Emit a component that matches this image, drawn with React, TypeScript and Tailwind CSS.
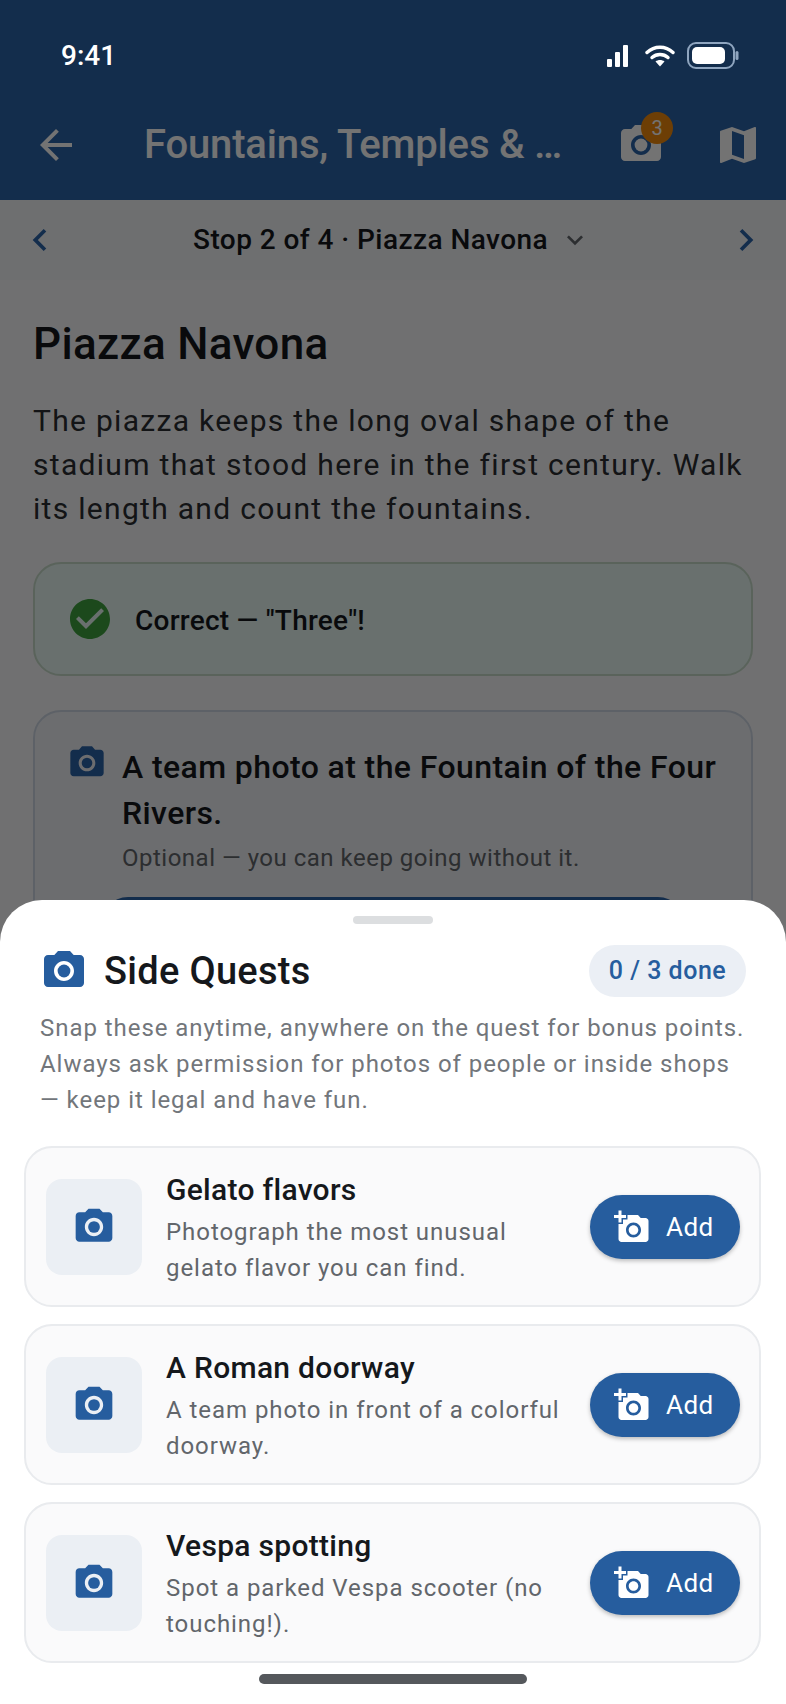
import {
  MdAddAPhoto,
  MdArrowBack,
  MdCheckCircle,
  MdChevronLeft,
  MdChevronRight,
  MdKeyboardArrowDown,
  MdMap,
  MdPhotoCamera,
} from "react-icons/md";

const quests = [
  { title: "Gelato flavors", lines: ["Photograph the most unusual", "gelato flavor you can find."] },
  { title: "A Roman doorway", lines: ["A team photo in front of a colorful", "doorway."] },
  { title: "Vespa spotting", lines: ["Spot a parked Vespa scooter (no", "touching!)."] },
];

function StatusIcons() {
  return (
    <div className="flex items-center">
      <svg width="22" height="24" viewBox="0 0 22 24" className="mr-[16px]">
        <rect x="0" y="15" width="5" height="8" rx="1" fill="#fff" />
        <rect x="8" y="8" width="5" height="15" rx="1" fill="#fff" />
        <rect x="16" y="1" width="5" height="22" rx="1" fill="#fff" />
      </svg>
      <svg width="30" height="24" viewBox="0 0 30 24" className="mr-[12px]">
        <path d="M2 8.5C9.5 1.5 20.5 1.5 28 8.5" fill="none" stroke="#fff" strokeWidth="3.4" strokeLinecap="round" />
        <path d="M7 13.5C11.5 9.5 18.5 9.5 23 13.5" fill="none" stroke="#fff" strokeWidth="3.4" strokeLinecap="round" />
        <path d="M10.5 17.5L15 22.5L19.5 17.5C17 15.5 13 15.5 10.5 17.5Z" fill="#fff" />
      </svg>
      <svg width="52" height="28" viewBox="0 0 52 28">
        <rect x="1" y="1" width="46" height="25" rx="8" fill="none" stroke="#8fa5bf" strokeWidth="2" />
        <rect x="5" y="5" width="33" height="17" rx="5" fill="#fff" />
        <rect x="48.5" y="9" width="3" height="9" rx="1.5" fill="#8fa5bf" />
      </svg>
    </div>
  );
}

function QuestCard({ title, lines }: { title: string; lines: string[] }) {
  return (
    <div className="flex h-[161px] items-center rounded-[28px] border-2 border-[#e9ebee] bg-[#fafafb] pr-[19px] pl-[20px]">
      <div className="flex h-[96px] w-[96px] flex-none items-center justify-center rounded-[16px] bg-[#ebeff4]">
        <MdPhotoCamera size={44} color="#265d9e" />
      </div>
      <div className="ml-[24px] flex-1 pt-[4px]">
        <div className="text-[30px] leading-[36px] font-medium tracking-[0.3px] text-[#15181c]">{title}</div>
        <div className="mt-[6px] text-[24px] leading-[36px] tracking-[0.95px] text-[#62666b]">
          {lines.map((l) => (
            <div key={l} className="whitespace-nowrap">
              {l}
            </div>
          ))}
        </div>
      </div>
      <button className="flex h-[64px] w-[150px] flex-none items-center rounded-full bg-[#265d9e] pl-[24px] text-white shadow-[0_2px_4px_rgba(0,0,0,0.25)]">
        <MdAddAPhoto size={36} color="#fff" />
        <span className="mt-[2px] ml-[16px] text-[26px] tracking-[0.5px]">Add</span>
      </button>
    </div>
  );
}

export default function App() {
  return (
    <div className="relative h-[1704px] w-[786px] overflow-hidden bg-[#f8f9fb] font-['Roboto',sans-serif]">
      <div id="header" className="h-[200px] bg-[#2c64a9]">
        <div className="h-[110px]" />
        <div className="flex h-[70px] items-center">
          <div className="ml-[32px] w-[65px] flex-none text-white">
            <MdArrowBack size={48} />
          </div>
          <div className="ml-[47px] w-[426px] flex-none text-[40px] font-medium tracking-[-0.16px] whitespace-nowrap text-white">
            Fountains, Temples &amp; <span className="tracking-[-2.5px]">...</span>
          </div>
          <div className="relative ml-[47px] flex-none text-white">
            <MdPhotoCamera size={48} />
            <div className="absolute -top-[9px] left-[24px] flex h-[32px] w-[32px] items-center justify-center rounded-full bg-[#f28b0c] text-[20px] text-white">
              3
            </div>
          </div>
          <div className="ml-[49px] flex-none text-white">
            <MdMap size={48} />
          </div>
        </div>
      </div>

      <div id="subheader" className="flex h-[80px] items-center bg-[#f3f5f8]">
        <MdChevronLeft size={44} color="#2c64a9" className="ml-[18px] flex-none" />
        <div className="ml-[131px] w-[353px] flex-none text-[28px] font-medium tracking-[0.44px] whitespace-nowrap text-[#15181c]">
          Stop 2 of 4 · Piazza Navona
        </div>
        <MdKeyboardArrowDown size={32} color="#62666b" className="ml-[13px] flex-none" />
        <MdChevronRight size={44} color="#2c64a9" className="ml-[133px] flex-none" />
      </div>

      <div id="content" className="px-[33px]">
        <div className="mt-[39px] text-[44px] leading-[50px] font-medium tracking-[0.33px] text-[#15181c]">
          Piazza Navona
        </div>
        <div className="mt-[30px] text-[30px] leading-[44px] tracking-[1.3px] text-[#2a2d31]">
          <div className="whitespace-nowrap">The piazza keeps the long oval shape of the</div>
          <div className="whitespace-nowrap">stadium that stood here in the first century. Walk</div>
          <div className="whitespace-nowrap">its length and count the fountains.</div>
        </div>
        <div className="mt-[31px] flex h-[114px] items-center rounded-[28px] border-2 border-[#c8dccb] bg-[#e8f8f4] pl-[31px]">
          <MdCheckCircle size={48} color="#3fa33f" className="flex-none" />
          <span className="mt-[3px] ml-[21px] text-[28px] font-medium tracking-[0.25px] text-[#15181c]">
            Correct — "Three"!
          </span>
        </div>
        <div className="mt-[34px] h-[300px] rounded-[28px] border-2 border-[#cfd8e4] bg-[#f0f2f6] px-[34px] pt-[32px]">
          <div className="flex">
            <MdPhotoCamera size={40} color="#2c64a9" className="-mt-[1px] -ml-[2px] flex-none" />
            <div className="ml-[15px]">
              <div className="text-[32px] leading-[46px] font-medium tracking-[0.4px] whitespace-nowrap text-[#15181c]">
                A team photo at the Fountain of the Four
              </div>
              <div className="text-[32px] leading-[46px] font-medium tracking-[0.4px] text-[#15181c]">Rivers.</div>
              <div className="mt-[6px] text-[24px] leading-[32px] tracking-[0.5px] text-[#62666b]">
                Optional — you can keep going without it.
              </div>
            </div>
          </div>
          <div className="mt-[23px] ml-[31px] h-[60px] w-[586px] rounded-[28px] bg-[#2c64a9]" />
        </div>
      </div>

      <div id="scrim" className="absolute inset-0 bg-black/55" />

      <div id="statusbar" className="absolute top-[38px] right-[47px] left-[61px] flex items-center justify-between">
        <span className="text-[28px] leading-[36px] font-medium text-white">9:41</span>
        <StatusIcons />
      </div>

      <div id="sheet" className="absolute right-0 bottom-0 left-0 h-[804px] rounded-t-[42px] bg-white">
        <div className="mx-auto mt-[16px] h-[8px] w-[80px] rounded-full bg-[#dcdee0]" />
        <div className="mt-[21px] flex h-[52px] items-center pr-[40px] pl-[40px]">
          <MdPhotoCamera size={48} color="#265d9e" className="flex-none" />
          <span className="ml-[16px] flex-1 text-[38px] font-medium tracking-[0.3px] text-[#15181c]">Side Quests</span>
          <span className="flex h-[52px] w-[157px] items-center justify-center rounded-full bg-[#ebeff5] text-[25px] font-medium tracking-[0.5px] text-[#265d9e]">
            0 / 3 done
          </span>
        </div>
        <div className="mt-[13px] px-[40px] text-[24px] leading-[36px] tracking-[0.95px] text-[#72767b]">
          <div className="whitespace-nowrap">Snap these anytime, anywhere on the quest for bonus points.</div>
          <div className="whitespace-nowrap">Always ask permission for photos of people or inside shops</div>
          <div className="whitespace-nowrap">— keep it legal and have fun.</div>
        </div>
        <div className="mt-[28px] flex flex-col gap-[17px] pr-[25px] pl-[24px]">
          {quests.map((q) => (
            <QuestCard key={q.title} title={q.title} lines={q.lines} />
          ))}
        </div>
        <div className="absolute bottom-[20px] left-[259px] h-[10px] w-[268px] rounded-full bg-[#55585c]" />
      </div>
    </div>
  );
}
